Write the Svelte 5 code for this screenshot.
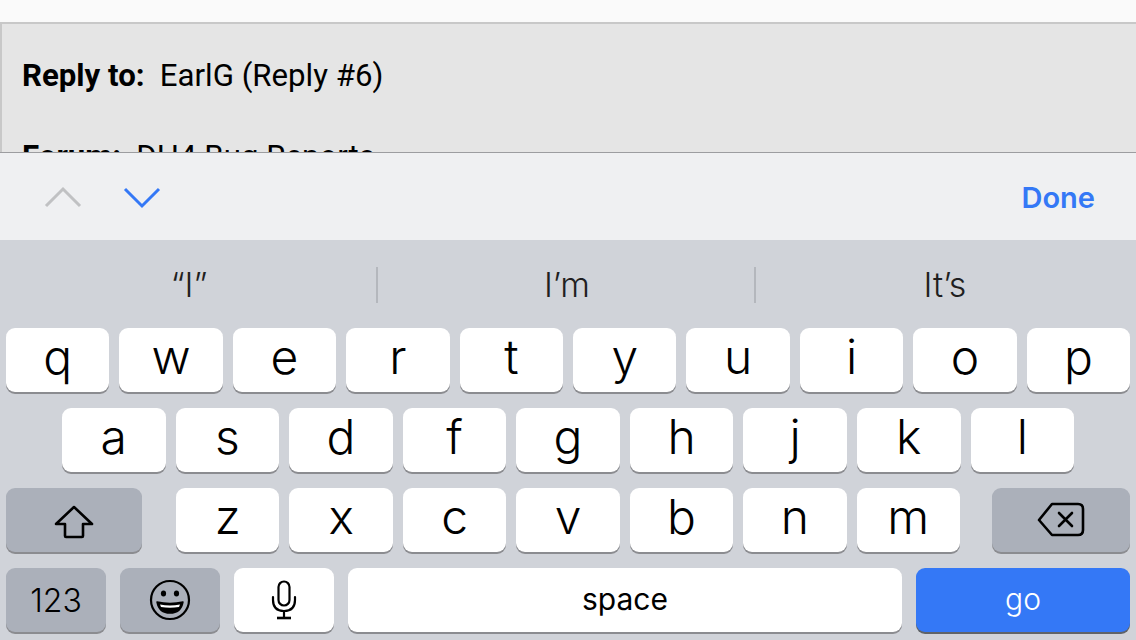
<script lang="ts">
	const row1 = ['q', 'w', 'e', 'r', 't', 'y', 'u', 'i', 'o', 'p'];
	const row2 = ['a', 's', 'd', 'f', 'g', 'h', 'j', 'k', 'l'];
	const row3 = ['z', 'x', 'c', 'v', 'b', 'n', 'm'];
	const suggestions = ['“I”', 'I’m', 'It’s'];
</script>

<div class="screen">
	<div class="top"></div>
	<section class="panel">
		<p><b>Reply to:</b> EarlG (Reply #6)</p>
		<p><b>Forum:</b> DH4 Bug Reports</p>
	</section>

	<div class="accessory">
		<svg width="40" height="24" viewBox="0 0 40 24" fill="none" stroke="#c0c1c3" stroke-width="3">
			<path d="M3 21 L20 4 L37 21" />
		</svg>
		<svg class="next" width="40" height="24" viewBox="0 0 40 24" fill="none" stroke="#3478f6" stroke-width="3">
			<path d="M3 4 L20 21 L37 4" />
		</svg>
		<span class="done">Done</span>
	</div>

	<div class="keyboard">
		<div class="suggestions">
			{#each suggestions as word}
				<span>{word}</span>
			{/each}
		</div>

		<div class="row">
			{#each row1 as k}
				<button class="key">{k}</button>
			{/each}
		</div>
		<div class="row home">
			{#each row2 as k}
				<button class="key">{k}</button>
			{/each}
		</div>
		<div class="row third">
			<button class="key dark shift" aria-label="shift">
				<svg width="40" height="36" viewBox="0 0 40 36" fill="none" stroke="#000" stroke-width="2.6" stroke-linejoin="round">
					<path d="M20 3 L38 20 H29 V32 Q29 33 28 33 H12 Q11 33 11 32 V20 H2 Z" />
				</svg>
			</button>
			<div class="letters">
				{#each row3 as k}
					<button class="key">{k}</button>
				{/each}
			</div>
			<button class="key dark del" aria-label="delete">
				<svg width="48" height="36" viewBox="0 0 48 36" fill="none" stroke="#000" stroke-width="2.6" stroke-linejoin="round" stroke-linecap="round">
					<path d="M15 2 H41 Q46 2 46 7 V28 Q46 33 41 33 H15 L2 18 Z" />
					<path d="M22 11 L35 24 M35 11 L22 24" />
				</svg>
			</button>
		</div>
		<div class="row bottom">
			<button class="key dark num">123</button>
			<button class="key dark icon" aria-label="emoji">
				<svg width="42" height="42" viewBox="0 0 42 42" fill="none" stroke="#000" stroke-width="2.2">
					<circle cx="21" cy="21" r="19" />
					<ellipse cx="14.5" cy="14.5" rx="2.6" ry="3" fill="#000" stroke="none" />
					<ellipse cx="27.5" cy="14.5" rx="2.6" ry="3" fill="#000" stroke="none" />
					<path d="M8 23 Q21 26 34 23 Q32 34 21 34 Q10 34 8 23 Z" fill="#000" stroke="#000" stroke-width="1.4" stroke-linejoin="round" />
					<path d="M11 25.5 Q21 27.5 31 25.5 L30 28 Q21 29.5 12 28 Z" fill="#fff" stroke="none" />
				</svg>
			</button>
			<button class="key icon" aria-label="dictation">
				<svg width="26" height="40" viewBox="0 0 26 40" fill="none" stroke="#000" stroke-width="2.2" stroke-linecap="round">
					<rect x="7.5" y="1.5" width="11" height="24" rx="5.5" />
					<path d="M2 17 V20 Q2 31 13 31 Q24 31 24 20 V17" />
					<path d="M13 31 V37.5" />
					<path d="M6 38 H20" stroke-width="2.6" stroke-linecap="butt" />
				</svg>
			</button>
			<button class="key space">space</button>
			<button class="key go">go</button>
		</div>
	</div>
</div>

<style>
	:global(body) {
		margin: 0;
		background: #fafafa;
	}

	.screen {
		width: 1136px;
		height: 640px;
		overflow: hidden;
		display: flex;
		flex-direction: column;
	}

	.top {
		height: 22px;
		background: #fafafa;
	}

	.panel {
		height: 130px;
		box-sizing: border-box;
		background: #e5e5e5;
		border-top: 2px solid #c8c8c8;
		border-left: 2px solid #c8c8c8;
		padding: 32px 0 0 20px;
		overflow: hidden;
		font-family: Roboto, sans-serif;
		font-size: 31.2px;
		line-height: 40px;
		color: #000;
	}

	.panel p {
		margin: 0 0 41px;
		white-space: nowrap;
	}

	.panel b {
		margin-right: 7.5px;
	}

	.accessory {
		height: 88px;
		box-sizing: border-box;
		border-top: 1px solid #9c9da0;
		background: #eff0f2;
		display: flex;
		align-items: center;
		padding: 0 41px 0 43px;
		font-family: Inter, sans-serif;
	}

	.accessory svg {
		margin-top: 1px;
	}

	.next {
		margin-left: 39px;
	}

	.done {
		margin-left: auto;
		color: #3478f6;
		font-size: 29px;
		font-weight: 600;
		margin-top: 2px;
	}

	.keyboard {
		flex: 1;
		background: #d0d3d9;
		font-family: Inter, sans-serif;
		display: flex;
		flex-direction: column;
	}

	.suggestions {
		height: 88px;
		display: flex;
		align-items: center;
	}

	.suggestions span {
		flex: 0 0 378px;
		box-sizing: border-box;
		height: 36px;
		line-height: 36px;
		margin-top: 1px;
		text-align: center;
		font-size: 34px;
		font-weight: 300;
		color: #1f1f21;
		padding-left: 2px;
	}

	.suggestions span:first-child {
		flex: 0 0 376px;
	}

	.suggestions span + span {
		border-left: 2px solid #b4b7bd;
	}

	.suggestions span:last-child {
		flex: 0 0 382px;
		padding: 0 2px 0 0;
	}

	.row {
		display: flex;
		gap: 10px;
		padding: 0 6px;
		height: 64px;
		margin-bottom: 16px;
	}

	.home {
		padding: 0 62px;
	}

	.key {
		flex: 1;
		min-width: 0;
		border: 0;
		padding: 0 0 6px;
		height: 64px;
		background: #fff;
		border-radius: 9px;
		box-shadow: 0 2px 0 #8b8c90;
		font-family: inherit;
		font-size: 48px;
		font-weight: 300;
		line-height: 1;
		color: #000;
		display: flex;
		align-items: center;
		justify-content: center;
	}

	.dark {
		background: #abb0ba;
	}

	.shift {
		flex: none;
		width: 136px;
		padding: 4px 0 0;
	}

	.letters {
		flex: 1;
		display: flex;
		gap: 10px;
		padding: 0 22px 0 24px;
	}

	.del {
		flex: none;
		width: 138px;
		padding: 0;
	}

	.bottom {
		gap: 14px;
		margin-bottom: 0;
	}

	.num {
		flex: none;
		width: 100px;
		font-size: 32px;
		font-weight: 300;
		padding: 2px 0 0;
	}

	.icon {
		flex: none;
		width: 100px;
		padding: 0;
	}

	.space {
		flex: 1;
		font-size: 30px;
		font-weight: 400;
		padding: 0 0 2px;
	}

	.go {
		flex: none;
		width: 214px;
		background: #3478f6;
		color: #fff;
		font-size: 30px;
		font-weight: 300;
		box-shadow: 0 2px 0 #5f6368;
		padding: 0 0 2px;
	}
</style>
